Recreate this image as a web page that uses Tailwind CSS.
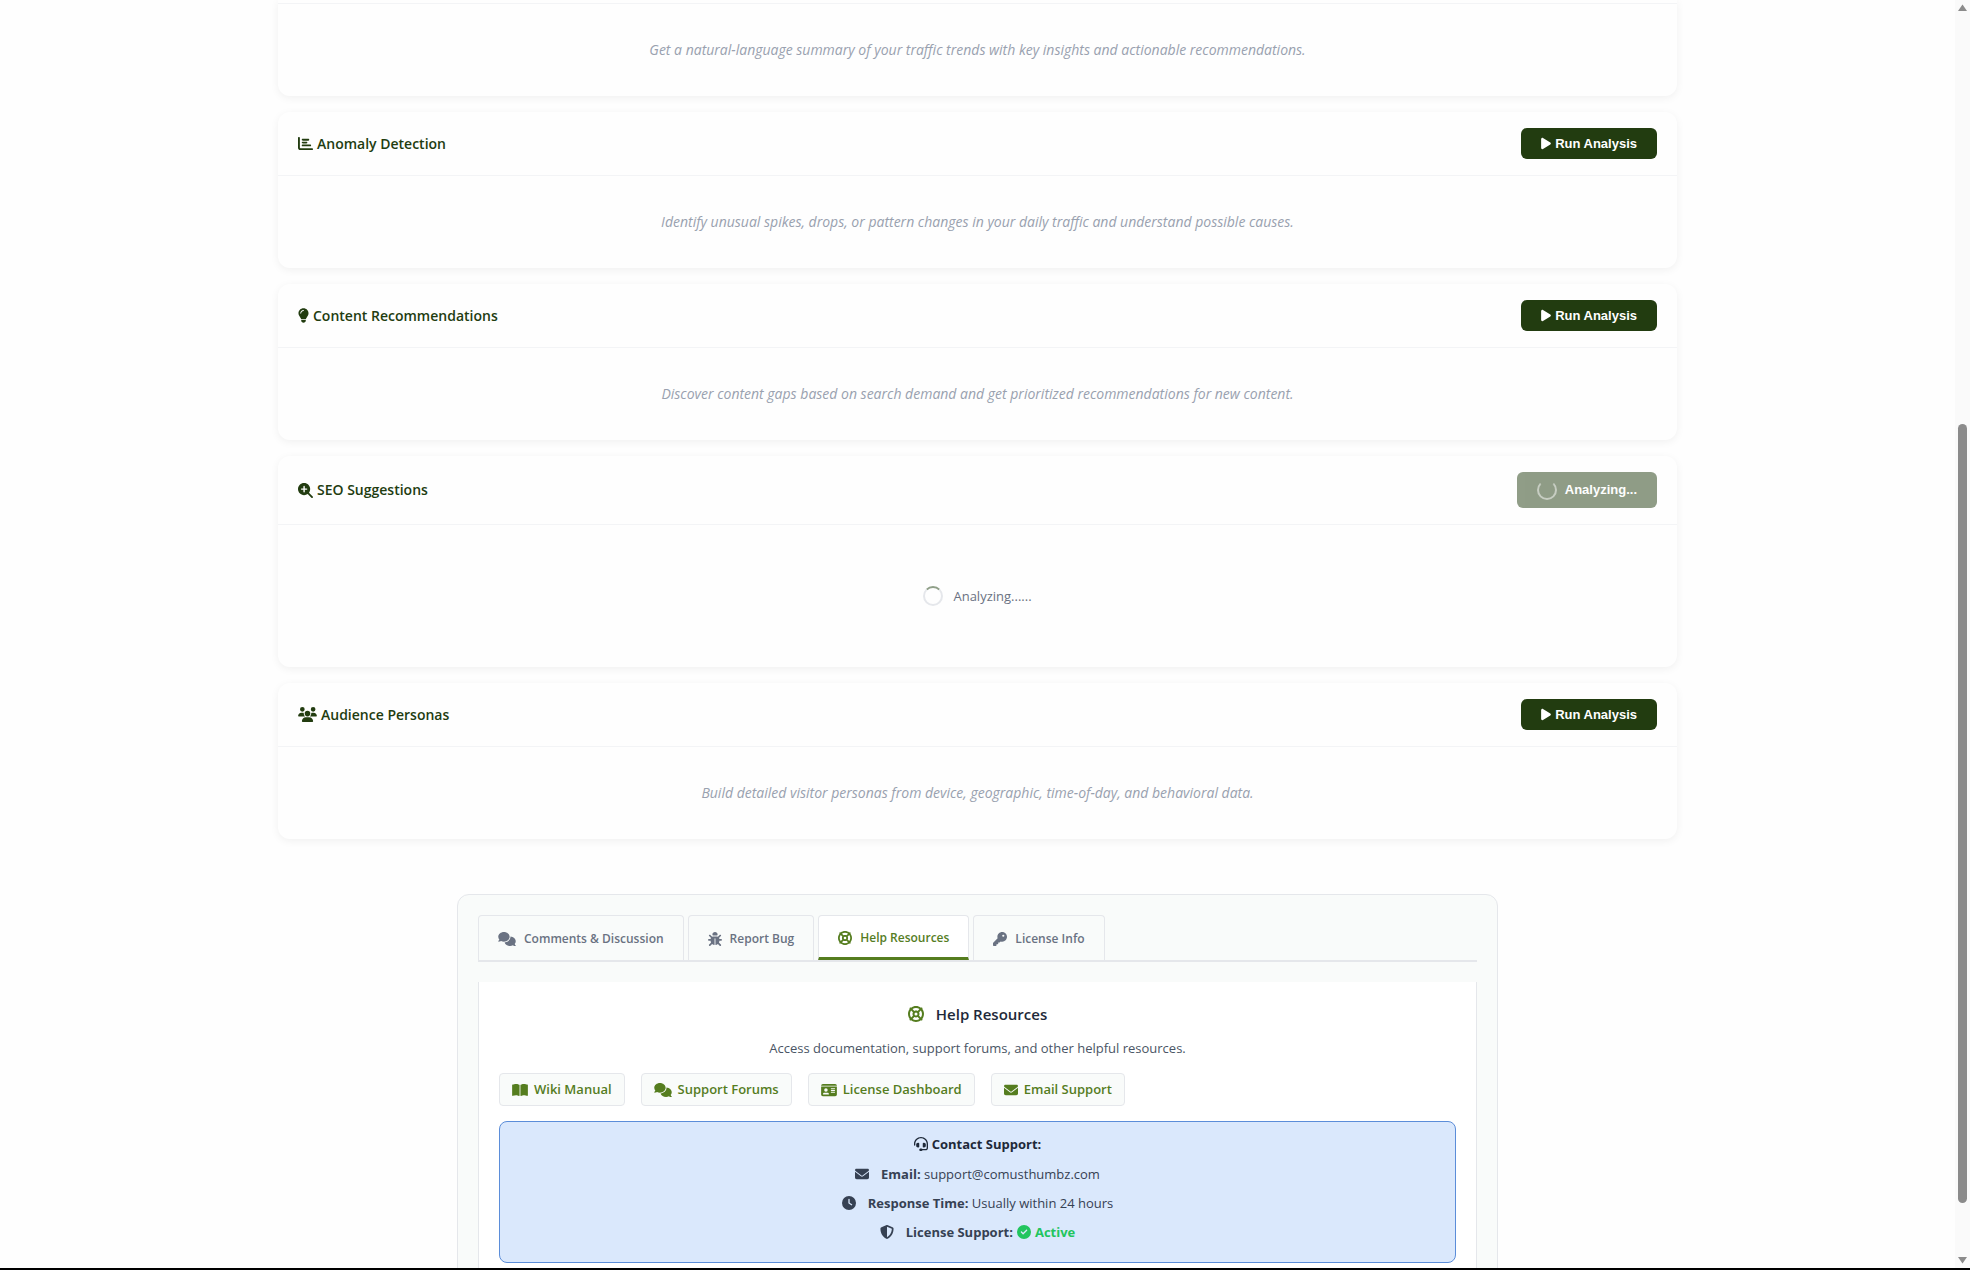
<!DOCTYPE html>
<html lang="en">
<head>
    <meta charset="UTF-8">
    <meta name="viewport" content="width=device-width, initial-scale=1.0">
    <script src="https://cdn.jsdelivr.net/npm/@tailwindcss/browser@4"></script>

    <title>AI Analysis</title>
</head>

<body class="bg-[#fefefe] font-['Open_Sans','Noto_Sans',sans-serif] h-screen overflow-hidden">

    <!-- icon sprite -->
    <svg class="hidden">
        <symbol id="play" viewBox="0 0 384 512"><path d="M73 39c-14.8-9.1-33.4-9.4-48.5-.9S0 62.6 0 80V432c0 17.4 9.4 33.4 24.5 41.9s33.7 8.1 48.5-.9L361 297c14.3-8.7 23-24.2 23-41s-8.7-32.2-23-41L73 39z"/></symbol>
        <symbol id="chart" viewBox="0 0 512 512"><path d="M32 32c17.7 0 32 14.3 32 32V400c0 8.8 7.2 16 16 16H480c17.7 0 32 14.3 32 32s-14.3 32-32 32H80c-44.2 0-80-35.8-80-80V64C0 46.3 14.3 32 32 32zm96 96c0-17.7 14.3-32 32-32l192 0c17.7 0 32 14.3 32 32s-14.3 32-32 32l-192 0c-17.7 0-32-14.3-32-32zm32 64H288c17.7 0 32 14.3 32 32s-14.3 32-32 32H160c-17.7 0-32-14.3-32-32s14.3-32 32-32zm0 96H416c17.7 0 32 14.3 32 32s-14.3 32-32 32H160c-17.7 0-32-14.3-32-32s14.3-32 32-32z"/></symbol>
        <symbol id="bulb" viewBox="0 0 384 512"><path d="M272 384c9.6-31.9 29.5-59.1 49.2-86.2l0 0c5.2-7.1 10.4-14.2 15.4-21.4c19.8-28.5 31.4-63 31.4-100.3C368 78.8 289.2 0 192 0S16 78.8 16 176c0 37.3 11.6 71.9 31.4 100.3c5 7.2 10.2 14.3 15.4 21.4l0 0c19.8 27.1 39.7 54.4 49.2 86.2H272zM192 512c44.2 0 80-35.8 80-80V416H112v16c0 44.2 35.8 80 80 80zM112 176c0 8.8-7.2 16-16 16s-16-7.2-16-16c0-61.9 50.1-112 112-112c8.8 0 16 7.2 16 16s-7.2 16-16 16c-44.2 0-80 35.8-80 80z"/></symbol>
        <symbol id="search-plus" viewBox="0 0 512 512"><path d="M416 208c0 45.9-14.9 88.3-40 122.7L502.6 457.4c12.5 12.5 12.5 32.8 0 45.3s-32.8 12.5-45.3 0L330.7 376c-34.4 25.2-76.8 40-122.7 40C93.1 416 0 322.9 0 208S93.1 0 208 0S416 93.1 416 208zM184 296c0 13.3 10.7 24 24 24s24-10.7 24-24V232h64c13.3 0 24-10.7 24-24s-10.7-24-24-24H232V120c0-13.3-10.7-24-24-24s-24 10.7-24 24v64H120c-13.3 0-24 10.7-24 24s10.7 24 24 24h64v64z"/></symbol>
        <symbol id="users" viewBox="0 0 640 512"><path d="M144 0a80 80 0 1 1 0 160A80 80 0 1 1 144 0zM512 0a80 80 0 1 1 0 160A80 80 0 1 1 512 0zM0 298.7C0 239.8 47.8 192 106.7 192h42.7c15.9 0 31 3.5 44.6 9.7c-1.3 7.2-1.9 14.7-1.9 22.3c0 38.2 16.8 72.5 43.3 96c-.2 0-.4 0-.7 0H21.3C9.6 320 0 310.4 0 298.7zM405.3 320c-.2 0-.4 0-.7 0c26.6-23.5 43.3-57.8 43.3-96c0-7.6-.7-15-1.9-22.3c13.6-6.3 28.7-9.7 44.6-9.7h42.7C592.2 192 640 239.8 640 298.7c0 11.8-9.6 21.3-21.3 21.3H405.3zM224 224a96 96 0 1 1 192 0 96 96 0 1 1 -192 0zM128 485.3C128 411.7 187.7 352 261.3 352H378.7C452.3 352 512 411.7 512 485.3c0 14.7-11.9 26.7-26.7 26.7H154.7c-14.7 0-26.7-11.9-26.7-26.7z"/></symbol>
        <symbol id="comments" viewBox="0 0 640 512"><path d="M208 352c114.9 0 208-78.8 208-176S322.9 0 208 0S0 78.8 0 176c0 38.6 14.7 74.3 39.6 103.4c-3.5 9.4-8.7 17.7-14.2 24.7c-4.8 6.2-9.7 11-13.3 14.3c-1.8 1.6-3.3 2.9-4.3 3.7c-.5 .4-.9 .7-1.1 .8l-.2 .2C1 327.2-1.4 334.4 .8 340.9S9.1 352 16 352c21.8 0 43.8-5.6 62.1-12.5c9.2-3.5 17.8-7.4 25.2-11.4C134.1 343.3 169.8 352 208 352zM448 176c0 112.3-99.1 196.9-216.5 207C255.8 457.4 336.4 512 432 512c38.2 0 73.9-8.7 104.7-23.9c7.5 4 16 7.9 25.2 11.4c18.3 6.9 40.3 12.5 62.1 12.5c6.9 0 13.1-4.5 15.2-11.1c2.1-6.6-.2-13.8-5.8-17.9l-.2-.2c-.2-.2-.6-.4-1.1-.8c-1-.8-2.5-2-4.3-3.7c-3.6-3.3-8.5-8.1-13.3-14.3c-5.5-7-10.7-15.4-14.2-24.7c24.9-29 39.6-64.7 39.6-103.4c0-92.8-84.9-168.9-192.6-175.5c.4 5.1 .6 10.3 .6 15.5z"/></symbol>
        <symbol id="bug" viewBox="0 0 512 512"><path d="M256 0c53 0 96 43 96 96v3.6c0 15.7-12.7 28.4-28.4 28.4H188.4c-15.7 0-28.4-12.7-28.4-28.4V96c0-53 43-96 96-96zM41.4 105.4c12.5-12.5 32.8-12.5 45.3 0l64 64c.7 .7 1.3 1.4 1.9 2.1c14.2-7.3 30.4-11.4 47.5-11.4H312c17.1 0 33.2 4.1 47.5 11.4c.6-.7 1.2-1.4 1.9-2.1l64-64c12.5-12.5 32.8-12.5 45.3 0s12.5 32.8 0 45.3l-64 64c-.7 .7-1.4 1.3-2.1 1.9c6.2 12 10.1 25.3 11.1 39.5H480c17.7 0 32 14.3 32 32s-14.3 32-32 32H416c0 24.6-5.5 47.8-15.4 68.6c2.2 1.3 4.2 2.9 6 4.8l64 64c12.5 12.5 12.5 32.8 0 45.3s-32.8 12.5-45.3 0l-63.1-63.1c-24.5 21.8-55.8 36.2-90.3 39.6V240c0-8.8-7.2-16-16-16s-16 7.2-16 16V479.2c-34.5-3.4-65.8-17.8-90.3-39.6L86.6 502.6c-12.5 12.5-32.8 12.5-45.3 0s-12.5-32.8 0-45.3l64-64c1.9-1.9 3.9-3.4 6-4.8C101.5 367.8 96 344.6 96 320H32c-17.7 0-32-14.3-32-32s14.3-32 32-32H96.3c1.1-14.1 5-27.5 11.1-39.5c-.7-.6-1.4-1.2-2.1-1.9l-64-64c-12.5-12.5-12.5-32.8 0-45.3z"/></symbol>
        <symbol id="life-ring" viewBox="0 0 512 512"><path d="M367.2 412.5C335.9 434.9 297.5 448 256 448s-79.9-13.1-111.2-35.5l58-58c15.8 8.6 34 13.5 53.3 13.5s37.4-4.9 53.3-13.5l58 58zm90.7 .8c33.8-43.4 54-98 54-157.3s-20.2-113.9-54-157.3c9-12.5 7.9-30.1-3.4-41.3S425.8 45 413.3 54C369.9 20.2 315.3 0 256 0S142.1 20.2 98.7 54c-12.5-9-30.1-7.9-41.3 3.4S45 86.2 54 98.7C20.2 142.1 0 196.7 0 256s20.2 113.9 54 157.3c-9 12.5-7.9 30.1 3.4 41.3S86.2 467 98.7 458c43.4 33.8 98 54 157.3 54s113.9-20.2 157.3-54c12.5 9 30.1 7.9 41.3-3.4s12.4-28.8 3.4-41.3zm-45.5-46.1l-58-58c8.6-15.8 13.5-34 13.5-53.3s-4.9-37.4-13.5-53.3l58-58C434.9 176.1 448 214.5 448 256s-13.1 79.9-35.5 111.2zM367.2 99.5l-58 58c-15.8-8.6-34-13.5-53.3-13.5s-37.4 4.9-53.3 13.5l-58-58C176.1 77.1 214.5 64 256 64s79.9 13.1 111.2 35.5zM157.5 309.3l-58 58C77.1 335.9 64 297.5 64 256s13.1-79.9 35.5-111.2l58 58c-8.6 15.8-13.5 34-13.5 53.3s4.9 37.4 13.5 53.3zM208 256a48 48 0 1 1 96 0 48 48 0 1 1 -96 0z"/></symbol>
        <symbol id="key" viewBox="0 0 512 512"><path d="M336 352c97.2 0 176-78.8 176-176S433.2 0 336 0S160 78.8 160 176c0 18.7 2.9 36.8 8.3 53.7L7 391c-4.5 4.5-7 10.6-7 17v80c0 13.3 10.7 24 24 24h80c13.3 0 24-10.7 24-24V448h40c13.3 0 24-10.7 24-24V384h40c6.4 0 12.5-2.5 17-7l33.3-33.3c16.9 5.4 35 8.3 53.7 8.3zM376 96a40 40 0 1 1 0 80 40 40 0 1 1 0-80z"/></symbol>
        <symbol id="book" viewBox="0 0 576 512"><path d="M249.6 471.5c10.8 3.8 22.4-4.1 22.4-15.5V78.6c0-4.2-1.6-8.4-5-11C247.4 52 202.4 32 144 32C93.5 32 46.3 45.3 18.1 56.1C6.8 60.5 0 71.7 0 83.8V454.1c0 11.9 12.8 20.2 24.1 16.5C55.6 460.1 105.5 448 144 448c33.9 0 79 14 105.6 23.5zm76.8 0C353 462 398.1 448 432 448c38.5 0 88.4 12.1 119.9 22.6c11.3 3.8 24.1-4.6 24.1-16.5V83.8c0-12.1-6.8-23.3-18.1-27.6C529.7 45.3 482.5 32 432 32c-58.4 0-103.4 20-123 35.6c-3.3 2.6-5 6.8-5 11V456c0 11.4 11.7 19.3 22.4 15.5z"/></symbol>
        <symbol id="id-card" viewBox="0 0 576 512"><path d="M0 96l576 0c0-35.3-28.7-64-64-64H64C28.7 32 0 60.7 0 96zm0 32V416c0 35.3 28.7 64 64 64H512c35.3 0 64-28.7 64-64V128H0zM64 405.3c0-29.5 23.9-53.3 53.3-53.3H234.7c29.5 0 53.3 23.9 53.3 53.3c0 5.9-4.8 10.7-10.7 10.7H74.7c-5.9 0-10.7-4.8-10.7-10.7zM176 192a64 64 0 1 1 0 128 64 64 0 1 1 0-128zm176 16c0-8.8 7.2-16 16-16H496c8.8 0 16 7.2 16 16s-7.2 16-16 16H368c-8.8 0-16-7.2-16-16zm0 64c0-8.8 7.2-16 16-16H496c8.8 0 16 7.2 16 16s-7.2 16-16 16H368c-8.8 0-16-7.2-16-16zm0 64c0-8.8 7.2-16 16-16H496c8.8 0 16 7.2 16 16s-7.2 16-16 16H368c-8.8 0-16-7.2-16-16z"/></symbol>
        <symbol id="envelope" viewBox="0 0 512 512"><path d="M48 64C21.5 64 0 85.5 0 112c0 15.1 7.1 29.3 19.2 38.4L236.8 313.6c11.4 8.5 27 8.5 38.4 0L492.8 150.4c12.1-9.1 19.2-23.3 19.2-38.4c0-26.5-21.5-48-48-48H48zM0 176V384c0 35.3 28.7 64 64 64H448c35.3 0 64-28.7 64-64V176L294.4 339.2c-22.8 17.1-54 17.1-76.8 0L0 176z"/></symbol>
        <symbol id="headset" viewBox="0 0 512 512"><path d="M256 48C141.1 48 48 141.1 48 256v40c0 13.3-10.7 24-24 24s-24-10.7-24-24V256C0 114.6 114.6 0 256 0S512 114.6 512 256V400.1c0 48.6-39.4 88-88.1 88L313.6 488c-8.3 14.3-23.8 24-41.6 24H240c-26.5 0-48-21.5-48-48s21.5-48 48-48h32c17.8 0 33.3 9.7 41.6 24l110.4 .1c22.1 0 40-17.9 40-40V256c0-114.9-93.1-208-208-208zM144 208h16c17.7 0 32 14.3 32 32V352c0 17.7-14.3 32-32 32H144c-35.3 0-64-28.7-64-64V272c0-35.3 28.7-64 64-64zm224 0c35.3 0 64 28.7 64 64v48c0 35.3-28.7 64-64 64H352c-17.7 0-32-14.3-32-32V240c0-17.7 14.3-32 32-32h16z"/></symbol>
        <symbol id="clock" viewBox="0 0 512 512"><path d="M256 0a256 256 0 1 1 0 512A256 256 0 1 1 256 0zM232 120V256c0 8 4 15.5 10.7 20l96 64c11 7.4 25.9 4.4 33.3-6.7s4.4-25.9-6.7-33.3L280 243.2V120c0-13.3-10.7-24-24-24s-24 10.7-24 24z"/></symbol>
        <symbol id="shield" viewBox="0 0 512 512"><path d="M256 0c4.6 0 9.2 1 13.4 2.9L457.7 82.8c22 9.3 38.4 31 38.3 57.2c-.5 99.2-41.3 280.7-213.6 363.2c-16.7 8-36.1 8-52.8 0C57.3 420.7 16.5 239.2 16 140c-.1-26.2 16.3-47.9 38.3-57.2L242.7 2.9C246.8 1 251.4 0 256 0zm0 66.8V444.8C394 378 431.1 230.1 432 141.4L256 66.8l0 0z"/></symbol>
        <symbol id="check" viewBox="0 0 512 512"><path d="M256 512A256 256 0 1 0 256 0a256 256 0 1 0 0 512zM369 209L241 337c-9.4 9.4-24.6 9.4-33.9 0l-64-64c-9.4-9.4-9.4-24.6 0-33.9s24.6-9.4 33.9 0l47 47L335 175c9.4-9.4 24.6-9.4 33.9 0s9.4 24.6 0 33.9z"/></symbol>
    </svg>

    <main class="pr-[15px]">
        <div class="max-w-[1399px] mx-auto flex flex-col gap-4">

            <section class="rounded-b-xl shadow-[0_2px_8px_rgba(0,0,0,0.06)]">
                <div class="pt-[3px] border-b border-gray-100"></div>
                <p class="py-9 text-center italic text-[14px] leading-5 text-gray-400">Get a natural-language summary of your traffic trends with key insights and actionable recommendations.</p>
            </section>

            <section class="rounded-xl shadow-[0_2px_8px_rgba(0,0,0,0.06)]">
                <div class="flex items-center justify-between px-5 py-4 border-b border-gray-100">
                    <h3 class="flex items-center gap-1 text-[14px] leading-[22px] font-semibold text-[#223c10]"><svg class="h-[15px] w-[15px] fill-current"><use href="#chart"/></svg>Anomaly Detection</h3>
                    <button class="flex items-center gap-1 h-[31px] px-5 rounded-md bg-[#223c10] hover:bg-[#345a1a] text-white font-['Liberation_Sans',sans-serif] font-bold text-[13px]"><svg class="h-[13px] w-[10px] fill-current"><use href="#play"/></svg>Run Analysis</button>
                </div>
                <p class="py-9 text-center italic text-[14px] leading-5 text-gray-400">Identify unusual spikes, drops, or pattern changes in your daily traffic and understand possible causes.</p>
            </section>

            <section class="rounded-xl shadow-[0_2px_8px_rgba(0,0,0,0.06)]">
                <div class="flex items-center justify-between px-5 py-4 border-b border-gray-100">
                    <h3 class="flex items-center gap-1 text-[14px] leading-[22px] font-semibold text-[#223c10]"><svg class="h-[15px] w-[11px] fill-current"><use href="#bulb"/></svg>Content Recommendations</h3>
                    <button class="flex items-center gap-1 h-[31px] px-5 rounded-md bg-[#223c10] hover:bg-[#345a1a] text-white font-['Liberation_Sans',sans-serif] font-bold text-[13px]"><svg class="h-[13px] w-[10px] fill-current"><use href="#play"/></svg>Run Analysis</button>
                </div>
                <p class="py-9 text-center italic text-[14px] leading-5 text-gray-400">Discover content gaps based on search demand and get prioritized recommendations for new content.</p>
            </section>

            <section class="rounded-xl shadow-[0_2px_8px_rgba(0,0,0,0.06)]">
                <div class="flex items-center justify-between px-5 py-4 border-b border-gray-100">
                    <h3 class="flex items-center gap-1 text-[14px] leading-[22px] font-semibold text-[#223c10]"><svg class="h-[15px] w-[15px] fill-current"><use href="#search-plus"/></svg>SEO Suggestions</h3>
                    <button disabled class="flex items-center gap-2 h-9 px-5 rounded-md bg-[#223c10] opacity-50 text-white font-['Liberation_Sans',sans-serif] font-bold text-[13px]"><span class="size-5 rounded-full border-2 border-white/50 border-t-transparent"></span>Analyzing...</button>
                </div>
                <div class="flex items-center justify-center gap-[10px] py-[61px] text-[13px] leading-5 text-gray-500">
                    <span class="size-5 rounded-full border-2 border-gray-200 border-t-[#8f9f88]"></span>Analyzing......
                </div>
            </section>

            <section class="rounded-xl shadow-[0_2px_8px_rgba(0,0,0,0.06)]">
                <div class="flex items-center justify-between px-5 py-4 border-b border-gray-100">
                    <h3 class="flex items-center gap-1 text-[14px] leading-[22px] font-semibold text-[#223c10]"><svg class="h-[15px] w-[19px] fill-current"><use href="#users"/></svg>Audience Personas</h3>
                    <button class="flex items-center gap-1 h-[31px] px-5 rounded-md bg-[#223c10] hover:bg-[#345a1a] text-white font-['Liberation_Sans',sans-serif] font-bold text-[13px]"><svg class="h-[13px] w-[10px] fill-current"><use href="#play"/></svg>Run Analysis</button>
                </div>
                <p class="py-9 text-center italic text-[14px] leading-5 text-gray-400">Build detailed visitor personas from device, geographic, time-of-day, and behavioral data.</p>
            </section>
        </div>

        <div class="max-w-[1041px] mx-auto mt-[55px] p-5 pb-10 bg-[#f9fbfa] border border-gray-200 rounded-xl">
            <div class="flex items-end gap-1 border-b-2 border-gray-200 text-[12px] font-semibold text-gray-500">
                <button class="flex items-center gap-2 h-[45px] px-[19px] pt-[2px] border border-b-0 border-gray-200 rounded-t bg-[#f9fbfa]"><svg class="h-[14px] w-[18px] fill-current"><use href="#comments"/></svg>Comments &amp; Discussion</button>
                <button class="flex items-center gap-2 h-[45px] px-[19px] pt-[2px] border border-b-0 border-gray-200 rounded-t bg-[#f9fbfa]"><svg class="size-[14px] fill-current"><use href="#bug"/></svg>Report Bug</button>
                <button class="flex items-center gap-2 h-[45px] px-[19px] pt-[2px] border border-b-3 border-gray-200 border-b-[#557d1f] rounded-t bg-white text-[#557d1f]"><svg class="size-[14px] fill-current"><use href="#life-ring"/></svg>Help Resources</button>
                <button class="flex items-center gap-2 h-[45px] px-[19px] pt-[2px] border border-b-0 border-gray-200 rounded-t bg-[#f9fbfa]"><svg class="size-[14px] fill-current"><use href="#key"/></svg>License Info</button>
            </div>

            <div class="mt-5 p-5 bg-white border-x border-gray-200">
                <h4 class="flex items-center justify-center gap-3 text-[15px] leading-6 font-semibold text-gray-800"><svg class="size-4 fill-[#557d1f]"><use href="#life-ring"/></svg>Help Resources</h4>
                <p class="mt-3 text-center text-[13px] leading-5 text-gray-600">Access documentation, support forums, and other helpful resources.</p>
                <div class="flex gap-4 mt-[15px] text-[13px] font-semibold text-[#557d1f]">
                    <a href="#" class="flex items-center gap-[6px] h-[33px] px-3 border border-gray-200 rounded bg-[#f9fbfa]"><svg class="h-[14px] w-4 fill-current"><use href="#book"/></svg>Wiki Manual</a>
                    <a href="#" class="flex items-center gap-[6px] h-[33px] px-3 border border-gray-200 rounded bg-[#f9fbfa]"><svg class="h-[14px] w-[18px] fill-current"><use href="#comments"/></svg>Support Forums</a>
                    <a href="#" class="flex items-center gap-[6px] h-[33px] px-3 border border-gray-200 rounded bg-[#f9fbfa]"><svg class="h-[14px] w-4 fill-current"><use href="#id-card"/></svg>License Dashboard</a>
                    <a href="#" class="flex items-center gap-[6px] h-[33px] px-3 border border-gray-200 rounded bg-[#f9fbfa]"><svg class="size-[14px] fill-current"><use href="#envelope"/></svg>Email Support</a>
                </div>

                <div class="mt-[15px] pt-3 pb-5 border border-[#5b8dd9] rounded-lg bg-[#dae8fc] text-[13px] leading-5 text-gray-700">
                    <h5 class="flex items-center justify-center gap-1 font-bold text-gray-800"><svg class="size-[14px] fill-current"><use href="#headset"/></svg>Contact Support:</h5>
                    <div class="flex flex-col gap-[9px] mt-[10px]">
                        <p class="flex items-center justify-center gap-3"><svg class="size-[14px] fill-current"><use href="#envelope"/></svg><span><strong>Email:</strong> support@comusthumbz.com</span></p>
                        <p class="flex items-center justify-center gap-3"><svg class="size-[14px] fill-current"><use href="#clock"/></svg><span><strong>Response Time:</strong> Usually within 24 hours</span></p>
                        <p class="flex items-center justify-center gap-3"><svg class="size-[14px] fill-current"><use href="#shield"/></svg><span class="flex items-center gap-1"><strong>License Support:</strong><svg class="size-[14px] fill-[#22c55e]"><use href="#check"/></svg><strong class="text-[#22c55e]">Active</strong></span></p>
                    </div>
                </div>
            </div>
        </div>
    </main>

    <!-- scroll track -->
    <div class="fixed inset-y-0 right-0 w-[15px] flex flex-col items-center bg-[#fafafa] pt-1 pb-[6px]">
        <svg class="w-[9px] h-2 fill-[#8b8b8b]" viewBox="0 0 9 8"><path d="M4.500.5 9 7H0z"/></svg>
        <div class="grow-[412]"></div>
        <div class="grow-[780] w-[9px] rounded-full bg-[#8b8b8b]"></div>
        <div class="grow-[53]"></div>
        <svg class="w-[9px] h-2 fill-[#8b8b8b]" viewBox="0 0 9 8"><path d="M4.500 7.500 0 1H9z"/></svg>
    </div>
    <div class="fixed inset-x-0 bottom-0 h-[2px] bg-black"></div>
</body>
</html>
